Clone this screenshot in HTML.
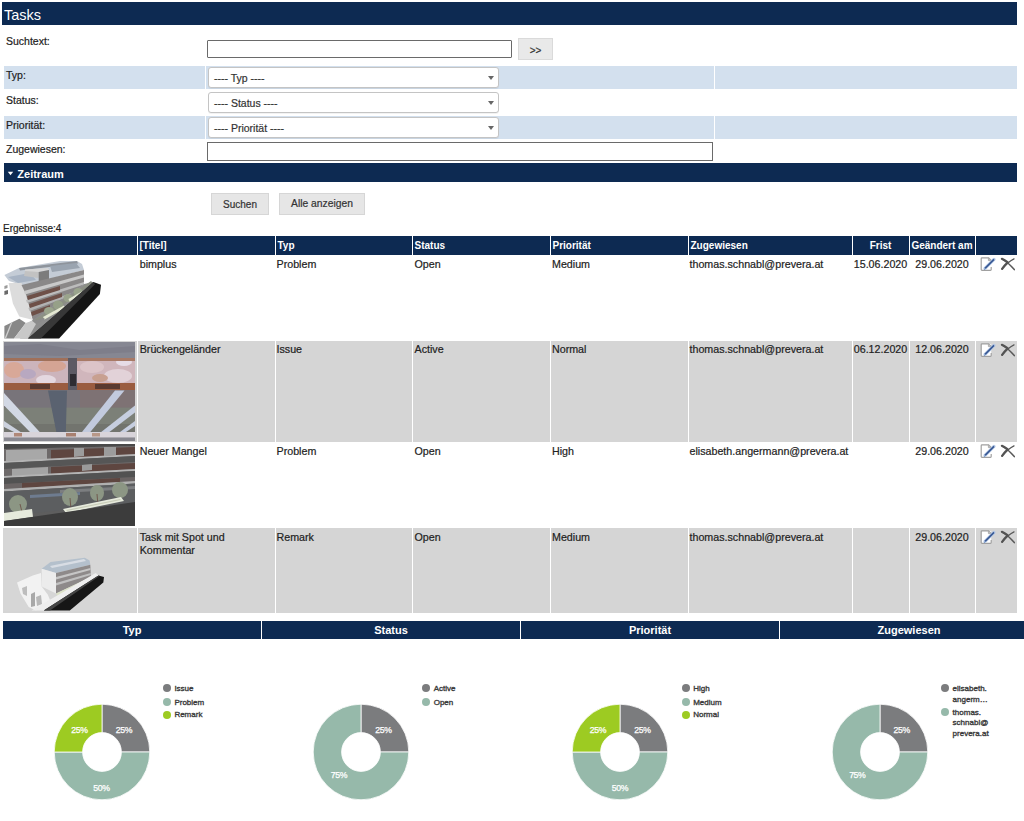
<!DOCTYPE html>
<html><head><meta charset="utf-8"><title>Tasks</title>
<style>
html,body{margin:0;padding:0;background:#fff;width:1024px;height:821px;overflow:hidden;position:relative;}
body{font-family:"Liberation Sans",sans-serif;}
.t{position:absolute;white-space:nowrap;line-height:1;-webkit-text-stroke:0.2px currentColor;}
.r{position:absolute;}
svg.r{display:block;}
</style></head><body>
<div class="r" style="left:2px;top:2px;width:1015px;height:23px;background:#0d2a52;"></div>
<div class="t" style="left:4px;top:7.53px;font-size:14.5px;color:#fff;-webkit-text-stroke:0;">Tasks</div>
<div class="t" style="left:6px;top:36.11px;font-size:10.5px;color:#222;">Suchtext:</div>
<div class="r" style="left:207px;top:40px;width:305px;height:18px;background:#fff;border:1px solid #6a6a6a;box-sizing:border-box;border-radius:1px;"></div>
<div class="r" style="left:518px;top:38px;width:35px;height:22px;background:#e9e9e9;border:1px solid #dadada;box-sizing:border-box;"></div>
<div class="t" style="left:515.50px;width:40px;text-align:center;top:45.53px;font-size:10px;color:#333;">&gt;&gt;</div>
<div class="r" style="left:4px;top:66px;width:201px;height:23.4px;background:#d3e0ee;"></div>
<div class="r" style="left:206px;top:66px;width:508px;height:23.4px;background:#d3e0ee;"></div>
<div class="r" style="left:715px;top:66px;width:302px;height:23.4px;background:#d3e0ee;"></div>
<div class="t" style="left:6px;top:69.61px;font-size:10.5px;color:#222;">Typ:</div>
<div class="r" style="left:207.5px;top:67.3px;width:291px;height:20.7px;background:#fff;border:1px solid #c4c4c4;box-sizing:border-box;border-radius:3px;box-shadow:0 1px 0 rgba(0,0,0,0.05);"></div>
<div class="t" style="left:214px;top:72.61px;font-size:10.5px;color:#333;">---- Typ ----</div>
<div class="r" style="left:488px;top:76px;width:0;height:0;border-left:3px solid transparent;border-right:3px solid transparent;border-top:4px solid #666;"></div>
<div class="t" style="left:6px;top:94.61px;font-size:10.5px;color:#222;">Status:</div>
<div class="r" style="left:207.5px;top:92.3px;width:291px;height:20.7px;background:#fff;border:1px solid #c4c4c4;box-sizing:border-box;border-radius:3px;box-shadow:0 1px 0 rgba(0,0,0,0.05);"></div>
<div class="t" style="left:214px;top:97.61px;font-size:10.5px;color:#333;">---- Status ----</div>
<div class="r" style="left:488px;top:101px;width:0;height:0;border-left:3px solid transparent;border-right:3px solid transparent;border-top:4px solid #666;"></div>
<div class="r" style="left:4px;top:116px;width:201px;height:23.4px;background:#d3e0ee;"></div>
<div class="r" style="left:206px;top:116px;width:508px;height:23.4px;background:#d3e0ee;"></div>
<div class="r" style="left:715px;top:116px;width:302px;height:23.4px;background:#d3e0ee;"></div>
<div class="t" style="left:6px;top:119.61px;font-size:10.5px;color:#222;">Priorität:</div>
<div class="r" style="left:207.5px;top:117.3px;width:291px;height:20.7px;background:#fff;border:1px solid #c4c4c4;box-sizing:border-box;border-radius:3px;box-shadow:0 1px 0 rgba(0,0,0,0.05);"></div>
<div class="t" style="left:214px;top:122.61px;font-size:10.5px;color:#333;">---- Priorität ----</div>
<div class="r" style="left:488px;top:126px;width:0;height:0;border-left:3px solid transparent;border-right:3px solid transparent;border-top:4px solid #666;"></div>
<div class="t" style="left:6px;top:144.11px;font-size:10.5px;color:#222;">Zugewiesen:</div>
<div class="r" style="left:207px;top:142px;width:506px;height:18.5px;background:#fff;border:1px solid #6a6a6a;box-sizing:border-box;"></div>
<div class="r" style="left:4px;top:163px;width:1013px;height:19px;background:#0d2a52;"></div>
<svg class="r" style="left:7px;top:171px" width="7" height="5" viewBox="0 0 7 5"><polygon points="0.8,0.8 6.2,0.8 3.5,4.2" fill="#fff"/></svg>
<div class="t" style="left:17.3px;top:168.99px;font-size:11px;font-weight:bold;-webkit-text-stroke:0;color:#fff;">Zeitraum</div>
<div class="r" style="left:211px;top:193px;width:57.5px;height:21.5px;background:#e6e6e6;border:1px solid #d6d6d6;box-sizing:border-box;"></div>
<div class="t" style="left:210.00px;width:60px;text-align:center;top:199.73px;font-size:10px;color:#333;">Suchen</div>
<div class="r" style="left:279px;top:193px;width:86px;height:21.5px;background:#e6e6e6;border:1px solid #d6d6d6;box-sizing:border-box;"></div>
<div class="t" style="left:277.00px;width:90px;text-align:center;top:199.48px;font-size:10.3px;color:#333;">Alle anzeigen</div>
<div class="t" style="left:3px;top:224.34px;font-size:10px;color:#222;">Ergebnisse:4</div>
<div class="r" style="left:3px;top:236px;width:134px;height:19px;background:#0d2a52;"></div>
<div class="r" style="left:138px;top:236px;width:137px;height:19px;background:#0d2a52;"></div>
<div class="r" style="left:276px;top:236px;width:136px;height:19px;background:#0d2a52;"></div>
<div class="r" style="left:413px;top:236px;width:137px;height:19px;background:#0d2a52;"></div>
<div class="r" style="left:551px;top:236px;width:137px;height:19px;background:#0d2a52;"></div>
<div class="r" style="left:689px;top:236px;width:163px;height:19px;background:#0d2a52;"></div>
<div class="r" style="left:853px;top:236px;width:56px;height:19px;background:#0d2a52;"></div>
<div class="r" style="left:910px;top:236px;width:65px;height:19px;background:#0d2a52;"></div>
<div class="r" style="left:976px;top:236px;width:41px;height:19px;background:#0d2a52;"></div>
<div class="t" style="left:139.5px;top:240.94px;font-size:10px;font-weight:bold;-webkit-text-stroke:0;color:#fff;">[Titel]</div>
<div class="t" style="left:277.5px;top:240.94px;font-size:10px;font-weight:bold;-webkit-text-stroke:0;color:#fff;">Typ</div>
<div class="t" style="left:414.5px;top:240.94px;font-size:10px;font-weight:bold;-webkit-text-stroke:0;color:#fff;">Status</div>
<div class="t" style="left:552.5px;top:240.94px;font-size:10px;font-weight:bold;-webkit-text-stroke:0;color:#fff;">Priorität</div>
<div class="t" style="left:690.5px;top:240.94px;font-size:10px;font-weight:bold;-webkit-text-stroke:0;color:#fff;">Zugewiesen</div>
<div class="t" style="left:852.50px;width:56px;text-align:center;top:240.94px;font-size:10px;font-weight:bold;-webkit-text-stroke:0;color:#fff;">Frist</div>
<div class="t" style="left:907.00px;width:70px;text-align:center;top:240.94px;font-size:10px;font-weight:bold;-webkit-text-stroke:0;color:#fff;">Geändert am</div>
<div class="t" style="left:139.7px;top:258.74px;font-size:10.7px;color:#222;">bimplus</div>
<div class="t" style="left:276.5px;top:258.74px;font-size:10.7px;color:#222;">Problem</div>
<div class="t" style="left:414.5px;top:258.74px;font-size:10.7px;color:#222;">Open</div>
<div class="t" style="left:552px;top:258.74px;font-size:10.7px;color:#222;">Medium</div>
<div class="t" style="left:689.5px;top:258.74px;font-size:10.7px;color:#222;">thomas.schnabl@prevera.at</div>
<div class="t" style="left:850.50px;width:60px;text-align:center;top:258.74px;font-size:10.7px;color:#222;">15.06.2020</div>
<div class="t" style="left:907.00px;width:70px;text-align:center;top:258.74px;font-size:10.7px;color:#222;">29.06.2020</div>
<svg class="r" style="left:980px;top:257px" width="16" height="16" viewBox="0 0 16 16">
<rect x="1.3" y="1" width="9.9" height="12.3" fill="#fff"/>
<path d="M11.2 6 V3.4 L8.6 0.9 H2 Q1.2 0.9 1.2 1.7 V12.6 Q1.2 13.3 2 13.3 H10.5 Q11.2 13.3 11.2 12.6 V10" fill="none" stroke="#a0a0a0" stroke-width="1.2"/>
<path d="M8.4 1 V3.6 H11.2 Z" fill="#cfcfcf" stroke="#a8a8a8" stroke-width="0.9"/>
<path d="M5 11.4 L14 2.4" stroke="#b4c8e6" stroke-width="3" stroke-linecap="round"/>
<path d="M5 11.4 L14 2.4" stroke="#3a5a94" stroke-width="1.6"/>
<path d="M4.2 12.8 L5.4 11.2" stroke="#6f8fc0" stroke-width="1"/>
</svg>
<svg class="r" style="left:1000px;top:257px" width="16" height="16" viewBox="0 0 16 16">
<path d="M1.9 1.8 Q7.5 4.6 14.3 12.6" fill="none" stroke="#595959" stroke-width="1.5" stroke-linecap="round"/>
<path d="M14 1.9 Q7.5 5.2 2.1 11.9" fill="none" stroke="#595959" stroke-width="1.3" stroke-linecap="round"/>
<path d="M1.9 1.8 Q4.5 3 7.5 5.2 M7.5 5.6 Q4.5 8.4 2.1 11.9" fill="none" stroke="#545454" stroke-width="2.2" stroke-linecap="round"/>
</svg>
<div class="r" style="left:3px;top:340.7px;width:134px;height:101.3px;background:#d5d5d5;"></div>
<div class="r" style="left:138px;top:340.7px;width:137px;height:101.3px;background:#d5d5d5;"></div>
<div class="r" style="left:276px;top:340.7px;width:136px;height:101.3px;background:#d5d5d5;"></div>
<div class="r" style="left:413px;top:340.7px;width:137px;height:101.3px;background:#d5d5d5;"></div>
<div class="r" style="left:551px;top:340.7px;width:137px;height:101.3px;background:#d5d5d5;"></div>
<div class="r" style="left:689px;top:340.7px;width:163px;height:101.3px;background:#d5d5d5;"></div>
<div class="r" style="left:853px;top:340.7px;width:56px;height:101.3px;background:#d5d5d5;"></div>
<div class="r" style="left:910px;top:340.7px;width:65px;height:101.3px;background:#d5d5d5;"></div>
<div class="r" style="left:976px;top:340.7px;width:41px;height:101.3px;background:#d5d5d5;"></div>
<div class="t" style="left:139.7px;top:344.44px;font-size:10.7px;color:#222;">Brückengeländer</div>
<div class="t" style="left:276.5px;top:344.44px;font-size:10.7px;color:#222;">Issue</div>
<div class="t" style="left:414.5px;top:344.44px;font-size:10.7px;color:#222;">Active</div>
<div class="t" style="left:552px;top:344.44px;font-size:10.7px;color:#222;">Normal</div>
<div class="t" style="left:689.5px;top:344.44px;font-size:10.7px;color:#222;">thomas.schnabl@prevera.at</div>
<div class="t" style="left:850.50px;width:60px;text-align:center;top:344.44px;font-size:10.7px;color:#222;">06.12.2020</div>
<div class="t" style="left:907.00px;width:70px;text-align:center;top:344.44px;font-size:10.7px;color:#222;">12.06.2020</div>
<svg class="r" style="left:980px;top:342.7px" width="16" height="16" viewBox="0 0 16 16">
<rect x="1.3" y="1" width="9.9" height="12.3" fill="#fff"/>
<path d="M11.2 6 V3.4 L8.6 0.9 H2 Q1.2 0.9 1.2 1.7 V12.6 Q1.2 13.3 2 13.3 H10.5 Q11.2 13.3 11.2 12.6 V10" fill="none" stroke="#a0a0a0" stroke-width="1.2"/>
<path d="M8.4 1 V3.6 H11.2 Z" fill="#cfcfcf" stroke="#a8a8a8" stroke-width="0.9"/>
<path d="M5 11.4 L14 2.4" stroke="#b4c8e6" stroke-width="3" stroke-linecap="round"/>
<path d="M5 11.4 L14 2.4" stroke="#3a5a94" stroke-width="1.6"/>
<path d="M4.2 12.8 L5.4 11.2" stroke="#6f8fc0" stroke-width="1"/>
</svg>
<svg class="r" style="left:1000px;top:342.7px" width="16" height="16" viewBox="0 0 16 16">
<path d="M1.9 1.8 Q7.5 4.6 14.3 12.6" fill="none" stroke="#595959" stroke-width="1.5" stroke-linecap="round"/>
<path d="M14 1.9 Q7.5 5.2 2.1 11.9" fill="none" stroke="#595959" stroke-width="1.3" stroke-linecap="round"/>
<path d="M1.9 1.8 Q4.5 3 7.5 5.2 M7.5 5.6 Q4.5 8.4 2.1 11.9" fill="none" stroke="#545454" stroke-width="2.2" stroke-linecap="round"/>
</svg>
<div class="t" style="left:139.7px;top:446.44px;font-size:10.7px;color:#222;">Neuer Mangel</div>
<div class="t" style="left:276.5px;top:446.44px;font-size:10.7px;color:#222;">Problem</div>
<div class="t" style="left:414.5px;top:446.44px;font-size:10.7px;color:#222;">Open</div>
<div class="t" style="left:552px;top:446.44px;font-size:10.7px;color:#222;">High</div>
<div class="t" style="left:689.5px;top:446.44px;font-size:10.7px;color:#222;">elisabeth.angermann@prevera.at</div>
<div class="t" style="left:907.00px;width:70px;text-align:center;top:446.44px;font-size:10.7px;color:#222;">29.06.2020</div>
<svg class="r" style="left:980px;top:443.7px" width="16" height="16" viewBox="0 0 16 16">
<rect x="1.3" y="1" width="9.9" height="12.3" fill="#fff"/>
<path d="M11.2 6 V3.4 L8.6 0.9 H2 Q1.2 0.9 1.2 1.7 V12.6 Q1.2 13.3 2 13.3 H10.5 Q11.2 13.3 11.2 12.6 V10" fill="none" stroke="#a0a0a0" stroke-width="1.2"/>
<path d="M8.4 1 V3.6 H11.2 Z" fill="#cfcfcf" stroke="#a8a8a8" stroke-width="0.9"/>
<path d="M5 11.4 L14 2.4" stroke="#b4c8e6" stroke-width="3" stroke-linecap="round"/>
<path d="M5 11.4 L14 2.4" stroke="#3a5a94" stroke-width="1.6"/>
<path d="M4.2 12.8 L5.4 11.2" stroke="#6f8fc0" stroke-width="1"/>
</svg>
<svg class="r" style="left:1000px;top:443.7px" width="16" height="16" viewBox="0 0 16 16">
<path d="M1.9 1.8 Q7.5 4.6 14.3 12.6" fill="none" stroke="#595959" stroke-width="1.5" stroke-linecap="round"/>
<path d="M14 1.9 Q7.5 5.2 2.1 11.9" fill="none" stroke="#595959" stroke-width="1.3" stroke-linecap="round"/>
<path d="M1.9 1.8 Q4.5 3 7.5 5.2 M7.5 5.6 Q4.5 8.4 2.1 11.9" fill="none" stroke="#545454" stroke-width="2.2" stroke-linecap="round"/>
</svg>
<div class="r" style="left:3px;top:527.6px;width:134px;height:85.2px;background:#d5d5d5;"></div>
<div class="r" style="left:138px;top:527.6px;width:137px;height:85.2px;background:#d5d5d5;"></div>
<div class="r" style="left:276px;top:527.6px;width:136px;height:85.2px;background:#d5d5d5;"></div>
<div class="r" style="left:413px;top:527.6px;width:137px;height:85.2px;background:#d5d5d5;"></div>
<div class="r" style="left:551px;top:527.6px;width:137px;height:85.2px;background:#d5d5d5;"></div>
<div class="r" style="left:689px;top:527.6px;width:163px;height:85.2px;background:#d5d5d5;"></div>
<div class="r" style="left:853px;top:527.6px;width:56px;height:85.2px;background:#d5d5d5;"></div>
<div class="r" style="left:910px;top:527.6px;width:65px;height:85.2px;background:#d5d5d5;"></div>
<div class="r" style="left:976px;top:527.6px;width:41px;height:85.2px;background:#d5d5d5;"></div>
<div class="t" style="left:139.7px;top:531.84px;font-size:10.7px;color:#222;">Task mit Spot und</div>
<div class="t" style="left:139.7px;top:545.04px;font-size:10.7px;color:#222;">Kommentar</div>
<div class="t" style="left:276.5px;top:531.84px;font-size:10.7px;color:#222;">Remark</div>
<div class="t" style="left:414.5px;top:531.84px;font-size:10.7px;color:#222;">Open</div>
<div class="t" style="left:552px;top:531.84px;font-size:10.7px;color:#222;">Medium</div>
<div class="t" style="left:689.5px;top:531.84px;font-size:10.7px;color:#222;">thomas.schnabl@prevera.at</div>
<div class="t" style="left:907.00px;width:70px;text-align:center;top:531.84px;font-size:10.7px;color:#222;">29.06.2020</div>
<svg class="r" style="left:980px;top:529.6px" width="16" height="16" viewBox="0 0 16 16">
<rect x="1.3" y="1" width="9.9" height="12.3" fill="#fff"/>
<path d="M11.2 6 V3.4 L8.6 0.9 H2 Q1.2 0.9 1.2 1.7 V12.6 Q1.2 13.3 2 13.3 H10.5 Q11.2 13.3 11.2 12.6 V10" fill="none" stroke="#a0a0a0" stroke-width="1.2"/>
<path d="M8.4 1 V3.6 H11.2 Z" fill="#cfcfcf" stroke="#a8a8a8" stroke-width="0.9"/>
<path d="M5 11.4 L14 2.4" stroke="#b4c8e6" stroke-width="3" stroke-linecap="round"/>
<path d="M5 11.4 L14 2.4" stroke="#3a5a94" stroke-width="1.6"/>
<path d="M4.2 12.8 L5.4 11.2" stroke="#6f8fc0" stroke-width="1"/>
</svg>
<svg class="r" style="left:1000px;top:529.6px" width="16" height="16" viewBox="0 0 16 16">
<path d="M1.9 1.8 Q7.5 4.6 14.3 12.6" fill="none" stroke="#595959" stroke-width="1.5" stroke-linecap="round"/>
<path d="M14 1.9 Q7.5 5.2 2.1 11.9" fill="none" stroke="#595959" stroke-width="1.3" stroke-linecap="round"/>
<path d="M1.9 1.8 Q4.5 3 7.5 5.2 M7.5 5.6 Q4.5 8.4 2.1 11.9" fill="none" stroke="#545454" stroke-width="2.2" stroke-linecap="round"/>
</svg>
<svg class="r" style="left:4px;top:258px" width="100" height="82" viewBox="4 258 100 82">
<polygon points="4.4,275 19,268 60,261 77,261 82,264 84,270 49,279 40,285 22,285 9,281" fill="#c4ccd6"/>
<polygon points="19,268 77,261 78,263.5 20,270.5" fill="#8e949c"/>
<polygon points="8,277 30,273 36,280 18,283" fill="#a8b4c4"/>
<polygon points="50,266 76,263 80,268 52,272" fill="#9aa4b0"/>
<polygon points="25,269.5 48,268 49,270 39,272 25,272" fill="#d6d6d6"/>
<polygon points="25,271 38.7,272 38.7,278 24,276" fill="#c2c2c2"/>
<polygon points="38.7,272 49,270 49,279.4 40.4,285.3 38.7,283" fill="#7c7c7c"/>
<polygon points="4.4,286 7.5,285 7.5,288 4.4,289" fill="#9a9a9a"/>
<polygon points="4.4,291 8,290 8,294 4.4,295" fill="#6a6a6a"/>
<polygon points="8.6,283 21.5,283 25.8,294 32.2,319.7 19.3,316.5 12.9,303.6" fill="#dcdcdc"/>
<polygon points="21.5,285 84,270 84,282 82,286 33,321 25.8,294" fill="#8a8888"/>
<polygon points="24,291 84,274.5 84,277.5 25,294.5" fill="#c9c9c9"/>
<polygon points="26,300 84,282 84,284.5 27,303" fill="#bcbcbc"/>
<polygon points="28.5,308 80,290 80,292.5 29.5,311" fill="#b2b2b2"/>
<polygon points="27,296 60,286 60,290 28,300" fill="#6e5048"/>
<polygon points="29,304 62,293 62,297 30,308" fill="#6e5048"/>
<polygon points="31,312 50,305 50,309 32,316" fill="#6e5048"/>
<polygon points="30,322 84,284 93.4,282 27.9,338.5 20,338.5" fill="#8e8e8e"/>
<polygon points="33,321 84,286 91,281 93,283 44,319" fill="#8c9084"/>
<ellipse cx="49" cy="311" rx="5" ry="4" fill="#9aa48c"/>
<ellipse cx="58" cy="305" rx="5" ry="4.5" fill="#96a088"/>
<ellipse cx="68" cy="298" rx="4.5" ry="4" fill="#9aa48c"/>
<ellipse cx="78" cy="292" rx="4.5" ry="4" fill="#9aa48c"/>
<polygon points="43,317 64,305.5 65,308 44.5,319.5" fill="#e4e8d2"/>
<polygon points="68.5,299 81.6,291.5 82.5,293.5 69.5,301.5" fill="#e4e8d2"/>
<polygon points="32,321 45,318 40.8,322 36,324" fill="#8c8c8c"/>
<polygon points="4.4,326 19.3,318.7 25.8,323 14,338.5 4.4,338.5" fill="#888"/>
<polygon points="11,322.5 12.5,322 6,338.5 4.5,338.5" fill="#cfcfcf"/>
<polygon points="14,338.5 25.8,323 32,320.8 36,324 27.9,338.5" fill="#c8c8c8"/>
<polygon points="27.9,338.5 93.4,282 101,284.8 99.9,294 59.1,338.5" fill="#151515"/>
<polygon points="27.9,338.5 93.4,282 95,284.2 40.8,338.5" fill="#383838"/>
</svg>
<svg class="r" style="left:4px;top:342px" width="131" height="99" viewBox="4 342 131 99">
<rect x="4" y="342" width="131" height="99" fill="#7c7a80"/>
<rect x="4" y="342" width="131" height="16" fill="#868792"/>
<polygon points="4,346 40,344 80,350 135,346 135,352 60,356 4,354" fill="#7e7e8a"/>
<rect x="4" y="390" width="131" height="18" fill="#78747a"/>
<rect x="80" y="390" width="55" height="18" fill="#7e7274"/>
<rect x="4" y="407.6" width="131" height="24.6" fill="#7c8078"/>
<rect x="4" y="424" width="131" height="8" fill="#72746e"/>
<polygon points="4,393 4,405.5 30,432 39.7,432" fill="#d2d8e4"/>
<polygon points="4,421 4,427 14,432 20.5,432" fill="#ccd2de"/>
<polygon points="115,390.5 124.5,390.5 90.3,432 82,432" fill="#c2cade"/>
<polygon points="135,405.5 135,412.4 109.4,432 101.2,432" fill="#c6cee0"/>
<polygon points="135,421 135,426 126,432 120,432" fill="#c6cee0"/>
<polygon points="48,390.5 67,390.5 65.7,437.7 57.5,437.7" fill="#5a6270"/>
<rect x="4" y="432" width="131" height="5.7" fill="#d8d4da"/>
<rect x="14" y="433" width="8" height="3.5" fill="#b08878"/>
<rect x="66" y="433" width="10" height="3.5" fill="#a88070"/>
<rect x="92" y="433" width="8" height="3.5" fill="#b89888"/>
<rect x="4" y="437.7" width="131" height="3.3" fill="#888890"/>
<rect x="4" y="358" width="64" height="32" fill="#ccb4bc"/>
<rect x="77" y="358" width="58" height="32" fill="#d0b6bc"/>
<ellipse cx="14" cy="370" rx="10" ry="8" fill="#d8a898"/>
<ellipse cx="52" cy="366" rx="14" ry="6" fill="#d4a494"/>
<ellipse cx="46" cy="380" rx="10" ry="5" fill="#e4d8e0"/>
<ellipse cx="28" cy="374" rx="8" ry="5" fill="#b8a8c0"/>
<ellipse cx="92" cy="367" rx="12" ry="6" fill="#dcc4c8"/>
<ellipse cx="118" cy="376" rx="14" ry="7" fill="#e2d2d8"/>
<ellipse cx="124" cy="362" rx="8" ry="4" fill="#e6dce6"/>
<ellipse cx="100" cy="378" rx="8" ry="4" fill="#c8a090"/>
<rect x="4" y="383" width="64" height="7" fill="#9a5c40"/>
<rect x="77" y="383" width="58" height="7" fill="#9a5c40"/>
<rect x="30" y="384" width="20" height="5" fill="#5a3a30"/>
<rect x="95" y="384" width="25" height="5" fill="#5a3a30"/>
<rect x="4" y="358" width="64" height="3" fill="#a0705a"/>
<rect x="77" y="358" width="58" height="3" fill="#a87a66"/>
<rect x="68" y="358" width="9" height="32" fill="#5c5a64"/>
<rect x="70" y="374" width="6" height="12" fill="#2e2c32"/>
</svg>
<svg class="r" style="left:4px;top:444px" width="131" height="82" viewBox="4 444 131 82">
<rect x="4" y="444" width="131" height="82" fill="#5e5e5e"/>
<polygon points="4,444 135,444 135,446 4,449" fill="#4a4a4a"/>
<polygon points="4,449 135,446 135,456 4,461" fill="#6e6a6a"/>
<polygon points="6,450 47,449 47,460 6,461" fill="#a8a8a8"/>
<polygon points="51,450 135,447 135,455 51,459" fill="#5e4640"/>
<polygon points="74,448 84,448 84,456 74,457" fill="#9c9c9c"/>
<polygon points="104,447 116,447 116,455 104,456" fill="#9c9c9c"/>
<polygon points="4,461 135,454 135,456 4,463" fill="#b4b4b4"/>
<polygon points="4,463 135,456 135,462 4,469" fill="#565656"/>
<polygon points="4,469 135,462 135,470 4,476" fill="#6e6a6a"/>
<polygon points="12,469 48,467 48,475 12,476" fill="#a4a4a4"/>
<polygon points="51,467 135,463 135,469 51,474" fill="#5e4640"/>
<polygon points="82,465 92,464 92,470 82,471" fill="#9a9a9a"/>
<polygon points="4,476 135,469 135,471 4,478" fill="#b4b4b4"/>
<polygon points="4,478 135,471 135,477 4,484" fill="#525252"/>
<polygon points="4,484 135,477 135,482 4,489" fill="#6a6464"/>
<polygon points="22,483 120,478 120,482 22,488" fill="#5e4640"/>
<polygon points="4,489 135,481 135,483.5 4,491.5" fill="#b0b0b0"/>
<polygon points="4,491.5 135,483.5 135,503 4,516" fill="#5c5e60"/>
<polygon points="30,495 80,492 80,495 30,498" fill="#6e7c90"/>
<polygon points="60,490 135,486 135,489 60,493" fill="#7c7e80"/>
<ellipse cx="18" cy="504" rx="9" ry="9" fill="#8c9684"/>
<ellipse cx="70" cy="497" rx="8" ry="9" fill="#8c9684"/>
<ellipse cx="97" cy="493" rx="7" ry="8" fill="#8c9684"/>
<ellipse cx="120" cy="490" rx="8" ry="8" fill="#8c9684"/>
<path d="M20 504 L23 516 M70 498 L71 510 M97 494 L98 506" stroke="#6a4a40" stroke-width="0.8"/>
<polygon points="63,509 121,497 124,501 66,513" fill="#e6eadc"/>
<polygon points="66,510 120,499 121,500 67,511" fill="#c8ccb8"/>
<polygon points="4,513 32,509 33,517 4,521" fill="#e6eadc"/>
<polygon points="4,521 135,502 135,526 4,526" fill="#3c3c3c"/>
</svg>
<svg class="r" style="left:3px;top:528px" width="133" height="83" viewBox="3 528 133 83">
<rect x="3" y="528" width="133" height="83" fill="#d6d6d6"/>
<polygon points="17,582.5 32.8,575.6 41,572.9 41.7,586.6 47.9,594.8 50,600 36,610.5 28.7,607 20.5,593.4" fill="#f2f2f2"/>
<polygon points="22,588 27,586 27,596 23,594" fill="#bdbdbd"/>
<polygon points="31,594 35,592 35,606 31,607" fill="#a8a8a8"/>
<polygon points="36,597 41,595 42,604 37,606" fill="#b8b8b8"/>
<polygon points="41.7,568.8 50.6,562 84.8,557.8 89.6,560.6 90.3,564.7 56,572.9" fill="#b4c0cc"/>
<polygon points="50,566 84,559 86,561 52,568" fill="#d8dde4"/>
<polygon points="41.7,568.8 56,572.9 56,593.4 41.7,586.6" fill="#ececec"/>
<polygon points="56,572.9 90.3,564.7 91,577 56,593.4" fill="#8e8a8a"/>
<polygon points="56,577 90.5,568 90.5,570 56,579.5" fill="#c6c6c6"/>
<polygon points="56,583 90.7,573 90.7,575 56,585.5" fill="#c0c0c0"/>
<polygon points="56,593.4 91,577 95,576 58,597" fill="#dce2c8"/>
<polygon points="31.5,610.5 95.8,572.9 98.5,575.6 43.8,610.5" fill="#eeeeee"/>
<polygon points="43.8,610.5 98.5,575.6 104,577 103.3,582.5 69.8,610.5" fill="#161616"/>
<polygon points="43.8,610.5 98.5,575.6 99.5,576 50,610.5" fill="#444"/>
</svg>
<div class="r" style="left:3px;top:620.5px;width:258px;height:18px;background:#0d2a52;"></div>
<div class="t" style="left:32.00px;width:200px;text-align:center;top:624.69px;font-size:11px;font-weight:bold;-webkit-text-stroke:0;color:#fff;">Typ</div>
<div class="r" style="left:262px;top:620.5px;width:258px;height:18px;background:#0d2a52;"></div>
<div class="t" style="left:291.00px;width:200px;text-align:center;top:624.69px;font-size:11px;font-weight:bold;-webkit-text-stroke:0;color:#fff;">Status</div>
<div class="r" style="left:521px;top:620.5px;width:258px;height:18px;background:#0d2a52;"></div>
<div class="t" style="left:550.00px;width:200px;text-align:center;top:624.69px;font-size:11px;font-weight:bold;-webkit-text-stroke:0;color:#fff;">Priorität</div>
<div class="r" style="left:780px;top:620.5px;width:258px;height:18px;background:#0d2a52;"></div>
<div class="t" style="left:809.00px;width:200px;text-align:center;top:624.69px;font-size:11px;font-weight:bold;-webkit-text-stroke:0;color:#fff;">Zugewiesen</div>
<svg class="r" style="left:52px;top:702px" width="100" height="100" viewBox="52 702 100 100"><path d="M102.00 704.20 A47.8 47.8 0 0 1 149.80 752.00 L121.40 752.00 A19.4 19.4 0 0 0 102.00 732.60 Z" fill="#7b7c7e" stroke="#fff" stroke-width="0.8"/><path d="M149.80 752.00 A47.8 47.8 0 0 1 54.20 752.00 L82.60 752.00 A19.4 19.4 0 0 0 121.40 752.00 Z" fill="#96b9aa" stroke="#fff" stroke-width="0.8"/><path d="M54.20 752.00 A47.8 47.8 0 0 1 102.00 704.20 L102.00 732.60 A19.4 19.4 0 0 0 82.60 752.00 Z" fill="#9dcb22" stroke="#fff" stroke-width="0.8"/></svg>
<div class="t" style="left:109.00px;width:30px;text-align:center;top:726.14px;font-size:8.7px;color:#fff;-webkit-text-stroke:0.25px #fff;letter-spacing:-0.35px;">25%</div>
<div class="t" style="left:64.50px;width:30px;text-align:center;top:726.14px;font-size:8.7px;color:#fff;-webkit-text-stroke:0.25px #fff;letter-spacing:-0.35px;">25%</div>
<div class="t" style="left:86.50px;width:30px;text-align:center;top:783.54px;font-size:8.7px;color:#fff;-webkit-text-stroke:0.25px #fff;letter-spacing:-0.35px;">50%</div>
<div class="r" style="left:162.9px;top:684.1px;width:8px;height:8px;border-radius:50%;background:#7b7c7e;"></div>
<div class="t" style="left:174.4px;top:685.03px;font-size:8px;color:#3a3a3a;-webkit-text-stroke:0.35px #3a3a3a;">Issue</div>
<div class="r" style="left:162.9px;top:697.6px;width:8px;height:8px;border-radius:50%;background:#96b9aa;"></div>
<div class="t" style="left:174.4px;top:698.53px;font-size:8px;color:#3a3a3a;-webkit-text-stroke:0.35px #3a3a3a;">Problem</div>
<div class="r" style="left:162.9px;top:710.5px;width:8px;height:8px;border-radius:50%;background:#9dcb22;"></div>
<div class="t" style="left:174.4px;top:711.43px;font-size:8px;color:#3a3a3a;-webkit-text-stroke:0.35px #3a3a3a;">Remark</div>
<svg class="r" style="left:311.4px;top:702px" width="100" height="100" viewBox="311.4 702 100 100"><path d="M361.40 704.20 A47.8 47.8 0 0 1 409.20 752.00 L380.80 752.00 A19.4 19.4 0 0 0 361.40 732.60 Z" fill="#7b7c7e" stroke="#fff" stroke-width="0.8"/><path d="M409.20 752.00 A47.8 47.8 0 1 1 361.40 704.20 L361.40 732.60 A19.4 19.4 0 1 0 380.80 752.00 Z" fill="#96b9aa" stroke="#fff" stroke-width="0.8"/></svg>
<div class="t" style="left:368.40px;width:30px;text-align:center;top:726.14px;font-size:8.7px;color:#fff;-webkit-text-stroke:0.25px #fff;letter-spacing:-0.35px;">25%</div>
<div class="t" style="left:324.00px;width:30px;text-align:center;top:770.74px;font-size:8.7px;color:#fff;-webkit-text-stroke:0.25px #fff;letter-spacing:-0.35px;">75%</div>
<div class="r" style="left:422.2px;top:684.1px;width:8px;height:8px;border-radius:50%;background:#7b7c7e;"></div>
<div class="t" style="left:433.7px;top:685.03px;font-size:8px;color:#3a3a3a;-webkit-text-stroke:0.35px #3a3a3a;">Active</div>
<div class="r" style="left:422.2px;top:697.6px;width:8px;height:8px;border-radius:50%;background:#96b9aa;"></div>
<div class="t" style="left:433.7px;top:698.53px;font-size:8px;color:#3a3a3a;-webkit-text-stroke:0.35px #3a3a3a;">Open</div>
<svg class="r" style="left:570.4px;top:702px" width="100" height="100" viewBox="570.4 702 100 100"><path d="M620.40 704.20 A47.8 47.8 0 0 1 668.20 752.00 L639.80 752.00 A19.4 19.4 0 0 0 620.40 732.60 Z" fill="#7b7c7e" stroke="#fff" stroke-width="0.8"/><path d="M668.20 752.00 A47.8 47.8 0 0 1 572.60 752.00 L601.00 752.00 A19.4 19.4 0 0 0 639.80 752.00 Z" fill="#96b9aa" stroke="#fff" stroke-width="0.8"/><path d="M572.60 752.00 A47.8 47.8 0 0 1 620.40 704.20 L620.40 732.60 A19.4 19.4 0 0 0 601.00 752.00 Z" fill="#9dcb22" stroke="#fff" stroke-width="0.8"/></svg>
<div class="t" style="left:627.40px;width:30px;text-align:center;top:726.14px;font-size:8.7px;color:#fff;-webkit-text-stroke:0.25px #fff;letter-spacing:-0.35px;">25%</div>
<div class="t" style="left:583.00px;width:30px;text-align:center;top:726.14px;font-size:8.7px;color:#fff;-webkit-text-stroke:0.25px #fff;letter-spacing:-0.35px;">25%</div>
<div class="t" style="left:605.00px;width:30px;text-align:center;top:783.54px;font-size:8.7px;color:#fff;-webkit-text-stroke:0.25px #fff;letter-spacing:-0.35px;">50%</div>
<div class="r" style="left:681.7px;top:684.1px;width:8px;height:8px;border-radius:50%;background:#7b7c7e;"></div>
<div class="t" style="left:693.2px;top:685.03px;font-size:8px;color:#3a3a3a;-webkit-text-stroke:0.35px #3a3a3a;">High</div>
<div class="r" style="left:681.7px;top:697.6px;width:8px;height:8px;border-radius:50%;background:#96b9aa;"></div>
<div class="t" style="left:693.2px;top:698.53px;font-size:8px;color:#3a3a3a;-webkit-text-stroke:0.35px #3a3a3a;">Medium</div>
<div class="r" style="left:681.7px;top:710.5px;width:8px;height:8px;border-radius:50%;background:#9dcb22;"></div>
<div class="t" style="left:693.2px;top:711.43px;font-size:8px;color:#3a3a3a;-webkit-text-stroke:0.35px #3a3a3a;">Normal</div>
<svg class="r" style="left:829.7px;top:702px" width="100" height="100" viewBox="829.7 702 100 100"><path d="M879.70 704.20 A47.8 47.8 0 0 1 927.50 752.00 L899.10 752.00 A19.4 19.4 0 0 0 879.70 732.60 Z" fill="#7b7c7e" stroke="#fff" stroke-width="0.8"/><path d="M927.50 752.00 A47.8 47.8 0 1 1 879.70 704.20 L879.70 732.60 A19.4 19.4 0 1 0 899.10 752.00 Z" fill="#96b9aa" stroke="#fff" stroke-width="0.8"/></svg>
<div class="t" style="left:886.70px;width:30px;text-align:center;top:726.14px;font-size:8.7px;color:#fff;-webkit-text-stroke:0.25px #fff;letter-spacing:-0.35px;">25%</div>
<div class="t" style="left:842.30px;width:30px;text-align:center;top:770.74px;font-size:8.7px;color:#fff;-webkit-text-stroke:0.25px #fff;letter-spacing:-0.35px;">75%</div>
<div class="r" style="left:941.1px;top:684.1px;width:8px;height:8px;border-radius:50%;background:#7b7c7e;"></div>
<div class="t" style="left:952.6px;top:685.03px;font-size:8px;color:#3a3a3a;-webkit-text-stroke:0.35px #3a3a3a;">elisabeth.</div>
<div class="t" style="left:952.6px;top:695.53px;font-size:8px;color:#3a3a3a;-webkit-text-stroke:0.35px #3a3a3a;">angerm…</div>
<div class="r" style="left:941.1px;top:707.8px;width:8px;height:8px;border-radius:50%;background:#96b9aa;"></div>
<div class="t" style="left:952.6px;top:708.73px;font-size:8px;color:#3a3a3a;-webkit-text-stroke:0.35px #3a3a3a;">thomas.</div>
<div class="t" style="left:952.6px;top:719.23px;font-size:8px;color:#3a3a3a;-webkit-text-stroke:0.35px #3a3a3a;">schnabl@</div>
<div class="t" style="left:952.6px;top:729.73px;font-size:8px;color:#3a3a3a;-webkit-text-stroke:0.35px #3a3a3a;">prevera.at</div>
</body></html>
